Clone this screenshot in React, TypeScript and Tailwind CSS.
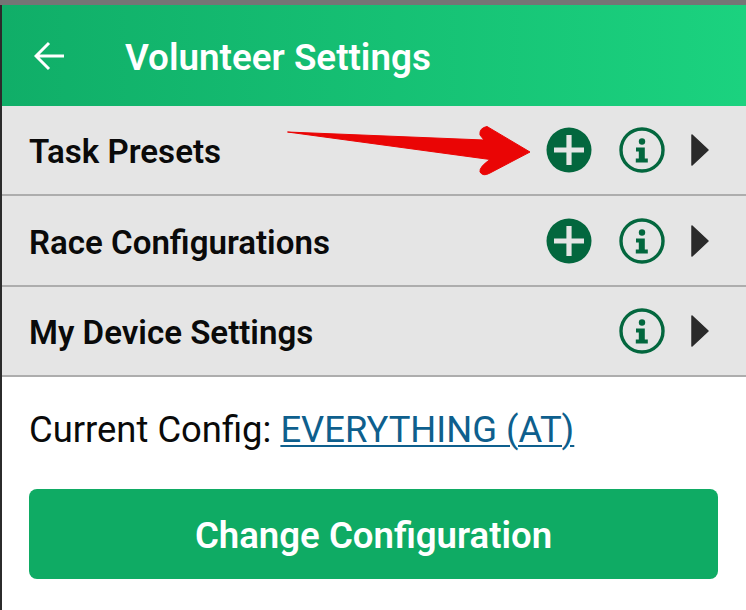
import React from "react";

function Plus() {
  return (
    <svg width="46" height="46" viewBox="0 0 46 46" className="shrink-0">
      <circle cx="23" cy="23" r="22.5" fill="#03673e" />
      <path d="M23 8v30M8 23h30" stroke="#e5e5e5" strokeWidth="5.2" />
    </svg>
  );
}

function Info() {
  return (
    <svg width="46" height="46" viewBox="0 0 46 46" className="shrink-0">
      <circle cx="23" cy="23" r="21" fill="none" stroke="#03673e" strokeWidth="3.4" />
      <circle cx="23" cy="14.5" r="3.2" fill="#03673e" />
      <path d="M17 20.5h8.8v11h3v4h-12v-4h3v-7h-2.800z" fill="#03673e" />
    </svg>
  );
}

function Caret() {
  return (
    <svg width="18" height="32" viewBox="0 0 18 32" className="shrink-0">
      <path d="M1 1L17 16L1 31Z" fill="#2a2a2a" stroke="#2a2a2a" strokeWidth="1.5" strokeLinejoin="round" />
    </svg>
  );
}

function Row({ label, plus, h }: { label: string; plus?: boolean; h: string }) {
  return (
    <div className={`flex items-center bg-[#e5e5e5] border-b-2 border-[#adadad] pl-[27px] pr-[37px] ${h}`}>
      <span className="flex-1 text-[33.100px] font-semibold text-[#0a0a0a] leading-none pt-[4px]">{label}</span>
      {plus && <Plus />}
      <div className="ml-[27px] mr-[26px]"><Info /></div>
      <Caret />
    </div>
  );
}

export default function App() {
  return (
    <div className="relative w-[746px] h-[610px] overflow-hidden bg-[#2b2b2b] pl-[2px] font-['Roboto',sans-serif]">
      <div className="h-[5px] bg-[#757575] -ml-[2px]" />
      <div className="bg-white h-[605px]">
        <header className="h-[101px] flex items-center pl-[32px] bg-gradient-to-r from-[#10ae68] to-[#1bd27f]">
          <svg width="30" height="30" viewBox="0 0 30 30" fill="none" stroke="#fff" strokeWidth="3" className="shrink-0">
            <path d="M30 15H3M15 2L2 15l13 13" />
          </svg>
          <h1 className="ml-[61px] text-[36.800px] font-semibold text-white leading-none pt-[5px]">Volunteer Settings</h1>
        </header>
        <Row label="Task Presets" plus h="h-[90px]" />
        <Row label="Race Configurations" plus h="h-[91px]" />
        <Row label="My Device Settings" h="h-[90px]" />
        <div className="pl-[27px] pr-[28px]">
          <p className="pt-[33px] text-[36.400px] leading-[40px] text-[#0a0a0a]">
            Current Config: <span className="text-[#0e5f8d] underline underline-offset-[3px] decoration-2">EVERYTHING (AT)</span>
          </p>
          <button className="mt-[39px] w-full h-[90px] rounded-[8px] bg-[#0fab64] text-white text-[36.600px] font-semibold pt-[5px]">
            Change Configuration
          </button>
        </div>
      </div>
      <svg width="250" height="56" viewBox="0 0 250 56" className="absolute left-[287px] top-[125px]">
        <path d="M0.500 7L197 15L193 10Q192 3 200 1.500L243 27L203 48Q196 52 193 47Q192 42 203 34.500Z" fill="#ea0505" stroke="#ea0505" strokeLinejoin="round" />
      </svg>
    </div>
  );
}
